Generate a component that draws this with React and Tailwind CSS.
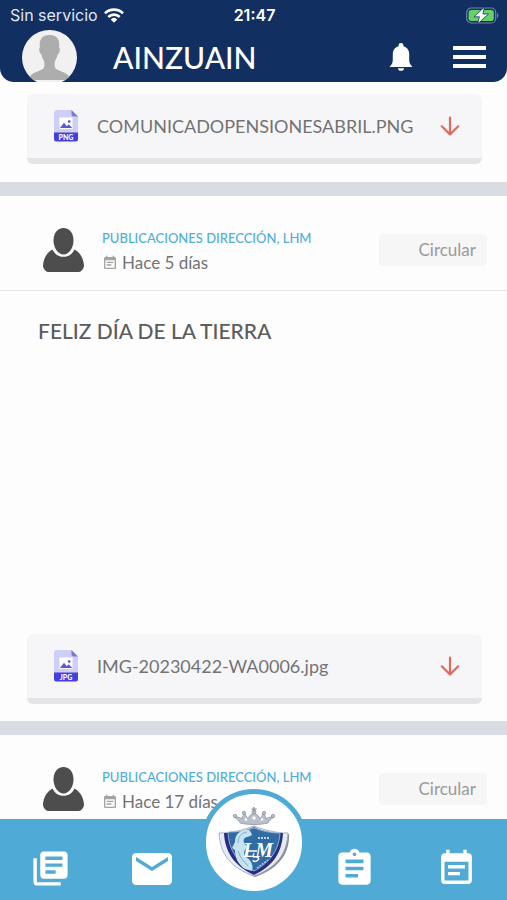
import React from "react";
import {
  MdAssignment,
  MdEmail,
  MdEventNote,
  MdLibraryBooks,
} from "react-icons/md";

const posts = [
  {
    id: 1,
    author: "PUBLICACIONES DIRECCIÓN, LHM",
    date: "Hace 5 días",
    type: "Circular",
    title: "FELIZ DÍA DE LA TIERRA",
    file: { name: "IMG-20230422-WA0006.jpg", ext: "JPG" },
  },
  {
    id: 2,
    author: "PUBLICACIONES DIRECCIÓN, LHM",
    date: "Hace 17 días",
    type: "Circular",
  },
];

function StatusBar() {
  return (
    <div className="grid h-[30px] grid-cols-3 items-center pl-2.5 pr-2 font-['Inter',sans-serif] text-base">
      <div className="flex items-center gap-1.5 whitespace-nowrap text-[#dfe6f2]">
        <span>Sin servicio</span>
        <svg viewBox="0 0 20 15" className="h-[15px] w-5" aria-hidden="true">
          <g fill="none" stroke="#fff" strokeWidth="2.7">
            <path d="M1 5.4a12.8 12.8 0 0 1 18 0" />
            <path d="M4.3 9a8.2 8.2 0 0 1 11.4 0" />
          </g>
          <path d="M10 14.8 6.7 11.4a4.8 4.8 0 0 1 6.6 0Z" fill="#fff" />
        </svg>
      </div>
      <span className="text-center font-semibold">21:47</span>
      <svg
        viewBox="0 0 33 17"
        className="h-[17px] w-[33px] justify-self-end"
        aria-hidden="true"
      >
        <rect x="0.7" y="1" width="29" height="15" rx="4.5" fill="none" stroke="#7185a6" strokeWidth="1.2" />
        <path d="M31 6v5c1.8-.7 1.8-4.3 0-5Z" fill="#7185a6" />
        <rect x="2.6" y="2.9" width="25.2" height="11.2" rx="2.8" fill="#64d264" />
        <path d="M18.5 0 8 9.800h5.400L11.500 17l11-10h-5.600Z" fill="#fff" stroke="#122f62" strokeWidth=".8" />
      </svg>
    </div>
  );
}

function Header() {
  return (
    <header className="relative z-10 h-[82px] shrink-0 overflow-hidden rounded-b-[14px] bg-[#122f62] text-white">
      <StatusBar />
      <div className="flex items-start pl-[22px] pr-[21px]">
        <svg
          viewBox="0 0 55 55"
          className="h-[55px] w-[55px] shrink-0 rounded-full bg-[#f1f1f1]"
          role="img"
          aria-label="Perfil"
        >
          <path
            d="M27.5 5c-7.5 0-10.600 4.5-9.600 12.5-1.400.7-.5 6.5 1.5 7 .7 3.5 2 5.500 2.900 7v5.500c-1.200 3.500-8 4.200-12 7C8 45.600 7.600 48 7 50h41c-.6-2-1-4.400-3.300-6-4-2.800-10.800-3.500-12-7v-5.500c.9-1.500 2.200-3.500 2.900-7 2-.5 2.900-6.300 1.500-7 1-8-2.100-12.500-9.600-12.500Z"
            fill="#adadad"
          />
        </svg>
        <h1 className="ml-9 mt-1.5 flex-1 text-[30px] font-medium leading-[42px]">AINZUAIN</h1>
        <button aria-label="Notificaciones" className="mt-3 mr-10">
          <svg viewBox="0 0 24 29" className="h-[29px] w-6" fill="#fff">
            <path d="M12 1c-1.4 0-2.4.9-2.4 2.300v.9C5.600 5.300 3.800 8.500 3.800 12v5.500c0 3.200-.9 4.900-3.300 7.500h23c-2.400-2.600-3.300-4.300-3.300-7.500V12c0-3.500-1.800-6.700-5.800-7.800v-.9C14.400 1.900 13.400 1 12 1Z" />
            <path d="M8.8 26.200h6.400c-.3 1.700-1.500 2.600-3.200 2.600s-2.900-.9-3.200-2.600Z" />
          </svg>
        </button>
        <button aria-label="Menú" className="mt-4 flex w-[33px] flex-col gap-[5px]">
          <span className="h-1 w-full bg-white" />
          <span className="h-1 w-full bg-white" />
          <span className="h-1 w-full bg-white" />
        </button>
      </div>
    </header>
  );
}

function FileIcon({ ext }) {
  return (
    <svg viewBox="0 0 24 32" className="h-8 w-6 shrink-0" aria-hidden="true">
      <path d="M3 0h14.5L24 6.500V23H0V3a3 3 0 0 1 3-3Z" fill="#cdcff7" />
      <path d="M17.5 0 24 6.500h-4.500a2 2 0 0 1-2-2Z" fill="#7c78dc" />
      <path d="M5.500 7.500h13V19h-13Z" fill="#fff" />
      <path d="m6 18 4-5.200 2.800 3.400 1.800-1.900 3.600 3.700Z" fill="#5a55dc" />
      <circle cx="15.2" cy="11.5" r="1.3" fill="#4b45d8" />
      <path d="M0 22.500h24V29a2.500 2.500 0 0 1-2.500 2.500h-19A2.500 2.500 0 0 1 0 29Z" fill="#433fe0" />
      <text x="12" y="29.600" textAnchor="middle" fontSize="7" fontWeight="900" fill="#fff">
        {ext}
      </text>
    </svg>
  );
}

function Attachment({ file }) {
  return (
    <a
      href="#archivo"
      className="ml-[27px] mr-[25px] flex h-[70px] items-center rounded-md border-b-[6px] border-[#e4e4e5] bg-[#f6f6f9] pl-[27px] pr-[22px]"
    >
      <FileIcon ext={file.ext} />
      <span className="ml-[19px] flex-1 whitespace-nowrap text-lg text-[#737373]">{file.name}</span>
      <svg viewBox="0 0 20 20" className="h-5 w-5 shrink-0" aria-hidden="true">
        <path
          d="M10 1.500v17M1.800 10.300l8.200 8.200 8.200-8.200"
          fill="none"
          stroke="#e0695c"
          strokeWidth="2.2"
          strokeLinecap="round"
          strokeLinejoin="round"
        />
      </svg>
    </a>
  );
}

function Post({ post }) {
  return (
    <article className="border-t-[14px] border-[#d9dde3]">
      <div className="flex h-[95px] items-start border-b border-[#e6e6e6] pl-[43px] pr-5 pt-8">
        <svg viewBox="0 0 41 44" className="h-11 w-[41px] shrink-0" fill="#4d4d4d" aria-hidden="true">
          <path d="M20.500 0C14.500 0 10.500 5 10.500 12.500S15 26.500 20.500 26.500s10-6.500 10-14S26.500 0 20.500 0Z" />
          <path d="M9.500 21.500C4 24.500.5 30 0 37.500-.1 40.500 3 44 5 44h31c2 0 5.100-3.500 5-6.500-.5-7.500-4-13-9.500-16-2.400 5-6 7.300-11 7.300s-8.600-2.300-11-7.300Z" />
        </svg>
        <div className="ml-[18px] flex-1 whitespace-nowrap">
          <p className="text-[13px] font-medium leading-5 text-[#4fadd8]">{post.author}</p>
          <p className="mt-1 flex items-center gap-1 text-[17px] leading-[22px] text-[#737373]">
            <MdEventNote className="h-4 w-4 text-[#a3a3a3]" />
            {post.date}
          </p>
        </div>
        <span className="mt-1.5 flex h-8 w-[108px] items-center justify-end rounded bg-[#f6f6f6] pr-[11px] text-[17px] text-[#9a9a9a]">
          {post.type}
        </span>
      </div>
      {post.title && (
        <h2 className="ml-[38px] mt-6 text-[21px] font-medium leading-8 text-[#5c5c5c]">{post.title}</h2>
      )}
      {post.file && (
        <div className="mb-[17px] mt-[287px]">
          <Attachment file={post.file} />
        </div>
      )}
    </article>
  );
}

function SchoolLogo() {
  return (
    <svg viewBox="0 0 80 84" className="h-[84px] w-20 shrink-0" role="img" aria-label="LHM">
      <g fill="#b9c0ca" stroke="#848e9c" strokeWidth=".7">
        <path d="M26 22c-1-2-3-4-6-6 4 0 6 0 8 2 0-2 1-4 3-5 1 2 2 3 3 5 1-3 3-5 6-6 3 1 5 3 6 6 1-2 2-3 3-5 2 1 3 3 3 5 2-2 4-2 8-2-3 2-5 4-6 6-8 2-20 2-28 0Z" />
        <circle cx="21" cy="15" r="1.7" />
        <circle cx="30" cy="12" r="1.7" />
        <circle cx="40" cy="11" r="2" />
        <circle cx="50" cy="12" r="1.7" />
        <circle cx="59" cy="15" r="1.7" />
      </g>
      <path d="M39.300 6h1.400v1.500h1.800v1.300h-1.800V11h-1.400V8.800h-1.800V7.500h1.800Z" fill="#8c96a4" />
      <g fill="#fff">
        <circle cx="32" cy="18.500" r="1.300" />
        <circle cx="40" cy="17" r="1.700" />
        <circle cx="48" cy="18.500" r="1.300" />
      </g>
      <path d="M9 35c12-1 22-4 32-8 11 4 21 7 34 6 1 20-11 35-34 43C22 68 11 54 9 35Z" fill="#8b8b92" />
      <path d="M5 32c13 0 24-3 35-7 11 4 21 7 34 7-1 21-12 35-34 43C17 67 6 53 5 32Z" fill="#e6ecf4" stroke="#95a3b6" strokeWidth=".8" />
      <path d="M10 32c11 0 20-2 30-6 9 4 18 6 29 6-1 20-10 33-29 42-19-9-29-22-30-42Z" fill="#2a2d83" />
      <path d="M14 31c10 0 18-1 26-4 8 3 16 5 26 5-1 16-9 29-26 38-17-9-25-20-26-39Z" fill="#316ba4" stroke="#a9c8de" strokeWidth=".8" />
      <path
        d="M35 29c-8-1-14 4-14 12l-3 6 3 2c0 9 4 15 10 19l7 2c2-5-1-11-6-14-3-3-2-6 0-9 2-3-4-5-2-9 2-3 6-2 8-4-1-3-2-4-3-5Z"
        fill="#c9e2f0"
      />
      <path d="M33 31c-6 1-9 5-9 11m0 8c2 6 5 10 10 15" fill="none" stroke="#80adcc" />
      <path d="M44 37h11" stroke="#b9d7eb" strokeWidth="2" strokeDasharray="2 1" />
      <text
        x="44"
        y="56"
        textAnchor="middle"
        fontFamily="Liberation Serif, serif"
        fontSize="20"
        fontStyle="italic"
        fontWeight="700"
        fill="#fff"
      >
        LM
      </text>
      <path d="M33 50h10M39 56c4-1 7 1 5 3s-5 2-5 0" fill="none" stroke="#fff" strokeWidth="1.4" />
      <path d="m43 67 11-8" stroke="#a9cbe1" strokeWidth="1.5" strokeDasharray="2 1" />
    </svg>
  );
}

function BottomNav() {
  return (
    <nav className="relative z-10 grid h-[81px] shrink-0 grid-cols-5 items-center justify-items-center bg-[#4fabd6] pt-[18px] text-white">
      <a href="#publicaciones" aria-label="Publicaciones">
        <MdLibraryBooks className="h-[41px] w-[41px]" />
      </a>
      <a href="#mensajes" aria-label="Mensajes">
        <MdEmail className="h-12 w-12" />
      </a>
      <a
        href="#inicio"
        aria-label="Inicio"
        className="absolute -top-[30px] left-1/2 flex h-[107px] w-[106px] -translate-x-1/2 items-center justify-center rounded-full border-5 border-[#4fabd6] bg-white"
      >
        <SchoolLogo />
      </a>
      <a href="#tareas" aria-label="Tareas" className="col-start-4">
        <MdAssignment className="h-[43px] w-[43px]" />
      </a>
      <a href="#calendario" aria-label="Calendario">
        <MdEventNote className="h-[41px] w-[41px]" />
      </a>
    </nav>
  );
}

export default function App() {
  return (
    <div className="flex h-screen flex-col overflow-hidden bg-[#fdfdfd] font-['Lato',sans-serif]">
      <Header />
      <main className="min-h-0 flex-1 overflow-y-auto [scrollbar-width:none]">
        <div className="mb-[18px] mt-3">
          <Attachment file={{ name: "COMUNICADOPENSIONESABRIL.PNG", ext: "PNG" }} />
        </div>
        {posts.map((post) => (
          <Post key={post.id} post={post} />
        ))}
      </main>
      <BottomNav />
    </div>
  );
}
